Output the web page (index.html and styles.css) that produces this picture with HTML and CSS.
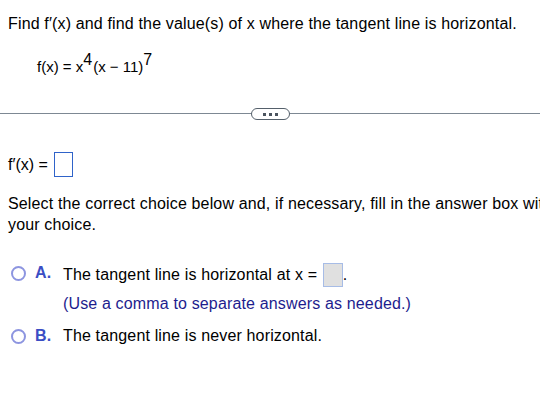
FILE: index.html
```html
<!DOCTYPE html>
<html>
<head>
<meta charset="utf-8">
<link rel="stylesheet" href="styles.css">
</head>
<body>
<div class="page">
  <div class="question">Find f′(x) and find the value(s) of x where the tangent line is horizontal.</div>
  <div class="math">f(x) = x<sup>4</sup>(x − 11)<sup>7</sup></div>
  <div class="divider">
    <span class="pill"><i></i><i></i><i></i></span>
  </div>
  <div class="deriv">
    <span class="deriv-label">f′(x) =</span>
    <span class="answer-box"></span>
  </div>
  <div class="instr">Select the correct choice below and, if necessary, fill in the answer box with<br>your choice.</div>
  <div class="choices">
    <div class="choice">
      <span class="radio"></span>
      <span class="letter">A.</span>
      <div class="choice-body">
        <div class="choice-line">The tangent line is horizontal at x = <span class="gray-box"></span>.</div>
        <div class="hint">(Use a comma to separate answers as needed.)</div>
      </div>
    </div>
    <div class="choice choice-b">
      <span class="radio"></span>
      <span class="letter">B.</span>
      <div class="choice-body">
        <div class="choice-line">The tangent line is never horizontal.</div>
      </div>
    </div>
  </div>
</div>
</body>
</html>
```

FILE: styles.css
```css
html, body {
  margin: 0;
  padding: 0;
  background: #ffffff;
  overflow: hidden;
}
body {
  font-family: "Liberation Sans", Arial, sans-serif;
  font-size: 16px;
  color: #000000;
  letter-spacing: 0.15px;
}
.page {
  width: 540px;
  height: 416px;
  overflow: hidden;
}
.question {
  margin: 14px 0 0 8px;
  line-height: 20px;
  white-space: nowrap;
}
.math {
  margin: 23px 0 0 37px;
  font-size: 15px;
  line-height: 20px;
  height: 20px;
  letter-spacing: 0;
}
.math sup {
  font-size: 16px;
  line-height: 0;
  vertical-align: 7px;
  margin-right: 1px;
}
.divider {
  margin-top: 31px;
  height: 12px;
  position: relative;
  display: flex;
  justify-content: center;
  align-items: center;
}
.divider::before {
  content: "";
  position: absolute;
  left: 0;
  right: 0;
  top: 5px;
  height: 1px;
  background: #7d8893;
}
.pill {
  position: relative;
  box-sizing: border-box;
  width: 39px;
  height: 12px;
  border: 1px solid #55606b;
  border-radius: 6px;
  background: #ffffff;
  display: flex;
  justify-content: center;
  align-items: center;
  gap: 3px;
}
.pill i {
  display: block;
  width: 3px;
  height: 3px;
  background: #4a545e;
}
.deriv {
  margin: 32px 0 0 8px;
  display: flex;
  align-items: center;
  height: 25px;
}
.deriv-label {
  font-size: 16px;
  letter-spacing: 0;
  margin-right: 6px;
}
.answer-box {
  box-sizing: border-box;
  width: 19px;
  height: 25px;
  border: 1px solid #2f63c9;
  background: #ffffff;
}
.instr {
  margin: 16px 0 0 8px;
  line-height: 21px;
  white-space: nowrap;
}
.choices {
  margin-top: 28px;
}
.choice {
  display: flex;
  align-items: flex-start;
}
.choice-b {
  margin-top: 12px;
}
.radio {
  box-sizing: border-box;
  width: 15px;
  height: 15px;
  border: 2px solid #8d95e0;
  border-radius: 50%;
  margin: 3px 0 0 11px;
  flex: none;
}
.letter {
  font-weight: bold;
  color: #3b4ec4;
  width: 28px;
  margin-left: 9px;
  line-height: 20px;
  flex: none;
}
.choice-body {
  line-height: 20px;
}
.choice-line {
  white-space: nowrap;
}
.gray-box {
  display: inline-block;
  box-sizing: border-box;
  width: 20px;
  height: 24px;
  vertical-align: -7px;
  background: #e0e0e0;
  border: 1px solid #a7bce6;
  margin-left: 1px;
}
.hint {
  color: #1d1d8e;
  margin-top: 7px;
}
```
